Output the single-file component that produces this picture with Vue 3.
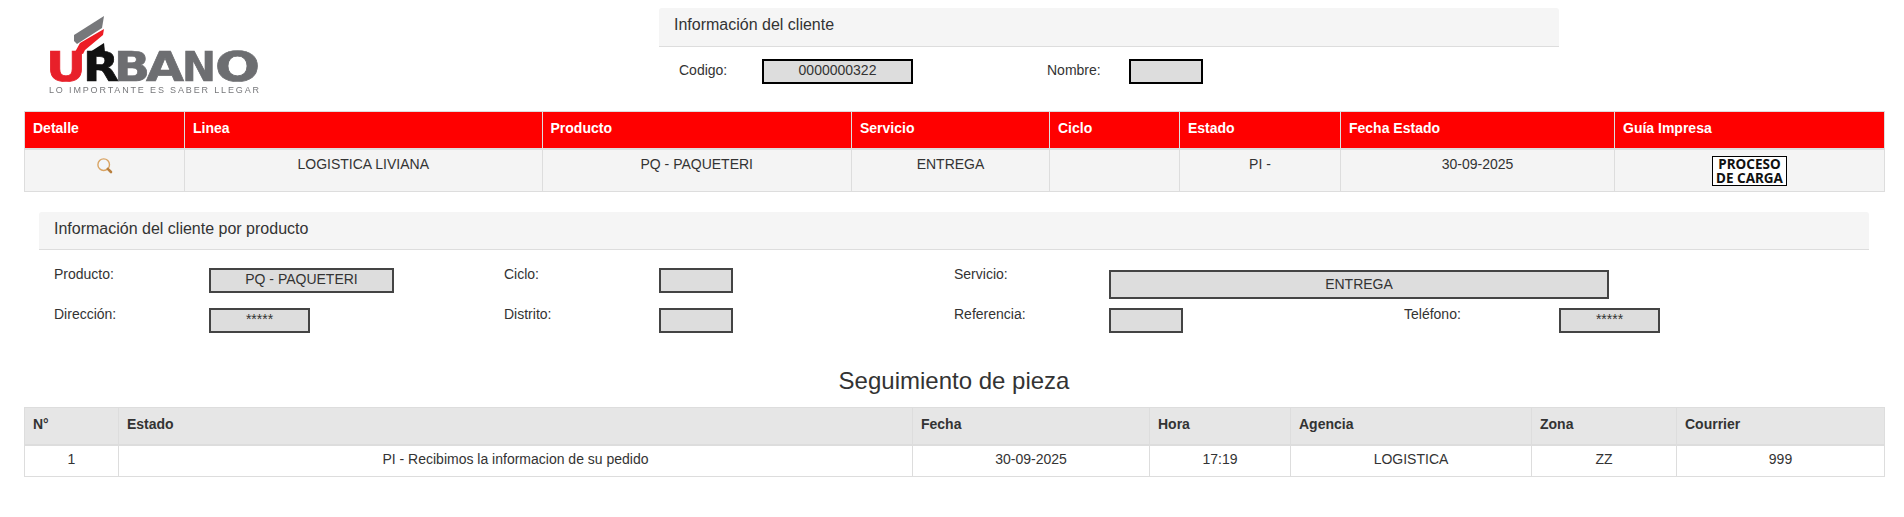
<script setup>
const infoCols = [
  { t: 'Detalle', w: 160 }, { t: 'Linea', w: 357.5 }, { t: 'Producto', w: 309.5 }, { t: 'Servicio', w: 198 },
  { t: 'Ciclo', w: 130 }, { t: 'Estado', w: 161 }, { t: 'Fecha Estado', w: 274 }, { t: 'Guía Impresa', w: 270 }
]
const segCols = [
  { t: 'N°', w: 94 }, { t: 'Estado', w: 794 }, { t: 'Fecha', w: 237 }, { t: 'Hora', w: 141 },
  { t: 'Agencia', w: 241 }, { t: 'Zona', w: 145 }, { t: 'Courrier', w: 208 }
]
const segRow = ['1', 'PI - Recibimos la informacion de su pedido', '30-09-2025', '17:19', 'LOGISTICA', 'ZZ', '999']
const logoLetters = [
  { c: 'U', x: 46, w: 40, f: '#e8202a' },
  { c: 'R', x: 83, w: 36, f: '#111' },
  { c: 'B', x: 114, w: 36, f: '#6d6e71' },
  { c: 'A', x: 146, w: 38, f: '#6d6e71' },
  { c: 'N', x: 182, w: 34, f: '#6d6e71' },
  { c: 'O', x: 215, w: 45, f: '#6d6e71' }
]
</script>

<template>
  <div class="page">
    <header class="top">
      <div class="logo">
        <svg width="240" height="96" viewBox="34 4 240 96">
          <path d="M74 35 L104 16 L102 28 L77 44 L74 41 Z" fill="#77787b"/>
          <path d="M75 52 L80 43 L104 29 L103 35 L85 50 L83 54 Z" fill="#ed1c24"/>
          <path d="M90 52 L104 43 L105 52 Z" fill="#111"/>
          <text v-for="l in logoLetters" :key="l.c" y="81" class="lg" :x="l.x" :fill="l.f" :stroke="l.f" :textLength="l.w" lengthAdjust="spacingAndGlyphs">{{ l.c }}</text>
          <text x="49" y="93" class="lgs" textLength="210">LO IMPORTANTE ES SABER LLEGAR</text>
        </svg>
      </div>
      <section class="panel client">
        <h3 class="panel-title">Información del cliente</h3>
        <div class="client-fields">
          <span class="lbl code-lbl">Codigo:</span>
          <span class="box black code-box">0000000322</span>
          <span class="lbl name-lbl">Nombre:</span>
          <span class="box black name-box"></span>
        </div>
      </section>
    </header>

    <table class="tb red">
      <colgroup><col v-for="c in infoCols" :key="c.t" :style="{ width: c.w + 'px' }"></colgroup>
      <thead><tr><th v-for="c in infoCols" :key="c.t">{{ c.t }}</th></tr></thead>
      <tbody>
        <tr>
          <td>
            <svg class="mag" width="17" height="17" viewBox="0 0 17 17">
              <circle cx="7.7" cy="7.7" r="5.8" fill="#f2f6fa" stroke="#d9a464" stroke-width="1.4"/>
              <path d="M11.8 11.8 L15 15" stroke="#b9803f" stroke-width="2.6" stroke-linecap="round"/>
            </svg>
          </td>
          <td>LOGISTICA LIVIANA</td>
          <td>PQ - PAQUETERI</td>
          <td>ENTREGA</td>
          <td></td>
          <td>PI -</td>
          <td>30-09-2025</td>
          <td class="stamp-cell"><span class="stamp">PROCESO<br>DE CARGA</span></td>
        </tr>
      </tbody>
    </table>

    <section class="panel product">
      <h3 class="panel-title">Información del cliente por producto</h3>
      <div class="fields">
        <span class="lbl">Producto:</span>
        <span class="val"><span class="box dark w185">PQ - PAQUETERI</span></span>
        <span class="lbl">Ciclo:</span>
        <span class="val"><span class="box dark w74"></span></span>
        <span class="lbl">Servicio:</span>
        <span class="val wide"><span class="box dark w500">ENTREGA</span></span>
        <span class="lbl">Dirección:</span>
        <span class="val"><span class="box dark w101">*****</span></span>
        <span class="lbl">Distrito:</span>
        <span class="val"><span class="box dark w74"></span></span>
        <span class="lbl">Referencia:</span>
        <span class="val"><span class="box dark w74"></span></span>
        <span class="lbl">Teléfono:</span>
        <span class="val"><span class="box dark w101">*****</span></span>
      </div>
    </section>

    <h2 class="title">Seguimiento de pieza</h2>

    <table class="tb gray">
      <colgroup><col v-for="c in segCols" :key="c.t" :style="{ width: c.w + 'px' }"></colgroup>
      <thead><tr><th v-for="c in segCols" :key="c.t">{{ c.t }}</th></tr></thead>
      <tbody><tr><td v-for="(v, i) in segRow" :key="i">{{ v }}</td></tr></tbody>
    </table>
  </div>
</template>

<style>
html, body { margin: 0; background: #fff; }
</style>

<style scoped>
.page { width: 1904px; font-family: "Liberation Sans", Arial, sans-serif; font-size: 14px; line-height: 20px; color: #333; }
.top { display: flex; height: 111px; }
.logo { width: 659px; padding: 4px 0 0 34px; box-sizing: border-box; }
.logo svg { display: block; filter: blur(0.5px); }
.lg { font: 700 41px "DejaVu Sans", sans-serif; stroke-width: 0.7px; }
.lgs { font: 400 9px "Liberation Sans", sans-serif; fill: #77787b; }
.panel-title { margin: 0; background: #f5f5f5; border-bottom: 1px solid #ddd; border-radius: 3px 3px 0 0; font-size: 16px; font-weight: 400; line-height: 18px; padding: 8px 15px 11px; }
.client .panel-title { padding-bottom: 12px; }
.client { width: 900px; margin-top: 8px; }
.client-fields { display: flex; align-items: flex-start; padding-top: 12px; }
.lbl { display: block; }
.code-lbl { margin-left: 20px; width: 83px; margin-top: 1px; }
.name-lbl { margin-left: 134px; width: 82px; margin-top: 1px; }
.box { display: block; box-sizing: border-box; height: 25px; background: #ddd; text-align: center; line-height: 18px; }
.black { border: 2px solid #000; }
.dark { border: 2px solid #444; }
.code-box { width: 151px; }
.name-box { width: 74px; }
.tb { border-collapse: collapse; table-layout: fixed; width: 1860px; margin-left: 24px; }
.tb th, .tb td { border: 1px solid #ddd; line-height: 20px; }
.tb th { padding: 6px 8px 10px; text-align: left; font-weight: 700; }
.tb td { text-align: center; vertical-align: top; }
.red th { background: #f00; color: #fff; border-bottom-width: 2px; height: 37px; box-sizing: border-box; }
.red td { background: #f4f4f4; padding: 4px 8px 0; height: 41px; box-sizing: border-box; }
.red td.stamp-cell { padding: 6px 8px 5px; }
.gray th { background: #e6e6e6; border-bottom-width: 2px; height: 37px; box-sizing: border-box; }
.gray td { padding: 3px 8px 0; height: 31px; box-sizing: border-box; }
.mag { display: block; margin: 3px auto 0; }
.stamp { display: block; box-sizing: border-box; width: 75px; height: 30px; margin: 0 auto; border: 1px solid #000; background: #fff; color: #111; font-family: "Noto Sans", sans-serif; font-weight: 700; font-size: 13.5px; line-height: 14px; white-space: nowrap; }
.product { width: 1830px; margin: 20px 0 0 39px; }
.fields { display: grid; grid-template-columns: repeat(4, 155px 295px); padding: 14px 0 0 15px; grid-auto-rows: 40px; }
.val { display: block; padding-top: 4px; }
.wide { grid-column: span 3; }
.w185 { width: 185px; }
.w74 { width: 74px; }
.w101 { width: 101px; }
.w500 { width: 500px; margin-top: 2px; height: 29px; line-height: 25px; }
.title { margin: 24px 0 13px; padding-left: 4px; text-align: center; font-size: 24px; font-weight: 400; line-height: 26px; }
</style>
